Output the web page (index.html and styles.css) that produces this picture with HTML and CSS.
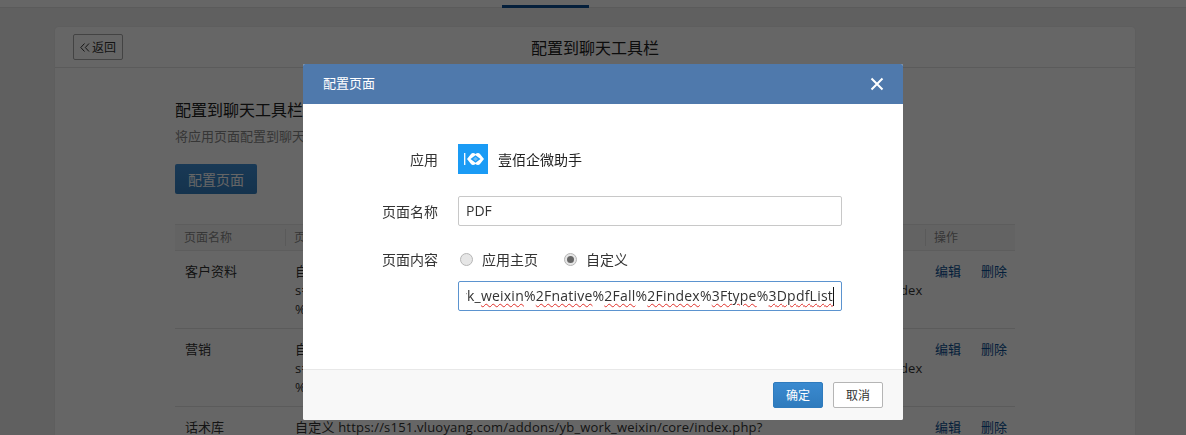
FILE: index.html
```html
<!DOCTYPE html>
<html lang="zh-CN">
<head>
<meta charset="utf-8">
<title>配置到聊天工具栏</title>
<link rel="stylesheet" href="styles.css">
</head>
<body>
<div class="topbar"><span class="topbar-tab"></span></div>
<main class="card">
  <header class="card-head">
    <button class="back"><svg class="back-icon" width="10" height="9" viewBox="0 0 10 9"><path d="M4.500 .5 .8 4.500l3.700 4M9 .5 5.300 4.500 9 8.500" fill="none" stroke="#333" stroke-width="1"/></svg>返回</button>
    <h1 class="card-title">配置到聊天工具栏</h1>
  </header>
  <section class="card-body">
    <h2 class="section-title">配置到聊天工具栏</h2>
    <p class="section-desc">将应用页面配置到聊天工具栏，方便成员在会话中使用</p>
    <button class="primary-btn">配置页面</button>
    <div class="table">
      <div class="row head-row">
        <div class="c1"><span>页面名称</span></div>
        <div class="c2 sep"><span>页面内容</span></div>
        <div class="c3 sep"><span>操作</span></div>
      </div>
      <div class="row">
        <div class="c1">客户资料</div>
        <div class="c2">自定义 https://s151.vluoyang.com/addons/yb_work_weixin/core/index.php?<br>s=/addons/yb_work_weixin/core/index.php%3Fi%3D1%26c%3Dentry%26m%2Fnative%2Fall%2Findex<br>%3Ftype%3Dcustomer</div>
        <div class="c3"><a>编辑</a><a>删除</a></div>
      </div>
      <div class="row">
        <div class="c1">营销</div>
        <div class="c2">自定义 https://s151.vluoyang.com/addons/yb_work_weixin/core/index.php?<br>s=/addons/yb_work_weixin/core/index.php%3Fi%3D1%26c%3Dentry%26m%2Fnative%2Fall%2Findex<br>%3Ftype%3Dmarket</div>
        <div class="c3"><a>编辑</a><a>删除</a></div>
      </div>
      <div class="row">
        <div class="c1">话术库</div>
        <div class="c2">自定义 https://s151.vluoyang.com/addons/yb_work_weixin/core/index.php?</div>
        <div class="c3"><a>编辑</a><a>删除</a></div>
      </div>
    </div>
  </section>
</main>
<div class="overlay"></div>
<div class="modal">
  <div class="modal-head">
    <span class="modal-title">配置页面</span>
    <svg class="close" width="14" height="14" viewBox="0 0 14 14"><path d="M1.500 1.500l11 11M12.500 1.500l-11 11" stroke="#fff" stroke-width="2"/></svg>
  </div>
  <div class="modal-body">
    <div class="form-row app-row">
      <label>应用</label>
      <svg class="app-logo" width="30" height="30" viewBox="0 0 30 30"><rect width="30" height="30" fill="#1a9bf5"/><path d="M6.700 9v12" stroke="#fff" stroke-width="1.300"/><path fill-rule="evenodd" d="M9 15l4-5q.8-1 2-1 1.300 0 2.500 1 1.200-1 2.500-1 1.200 0 2 1l4 5-4 5q-.8 1-2 1-1.300 0-2.500-1-1.200 1-2.500 1-1.200 0-2-1zM17.500 11.200 12.500 15l5 3.800 5-3.800z" fill="#fff"/><path d="M17.500 12.800 15 15l2.500 2.200L20 15z" fill="#fff" opacity=".35"/></svg>
      <span class="app-name">壹佰企微助手</span>
    </div>
    <div class="form-row name-row">
      <label>页面名称</label>
      <div class="input">PDF</div>
    </div>
    <div class="form-row radio-row">
      <label>页面内容</label>
      <span class="radio first"></span><span class="radio-text">应用主页</span>
      <span class="radio checked"></span><span class="radio-text">自定义</span>
    </div>
    <div class="form-row url-row">
      <label></label>
      <div class="input focus"><div class="url-clip"><span class="url">work_<i>weixin</i>%<i>2Fnative</i>%<i>2Fall</i>%<i>2Findex</i>%<i>3Ftype</i>%<i>3DpdfList</i></span></div><b class="caret"></b></div>
    </div>
  </div>
  <div class="modal-foot">
    <button class="ok">确定</button>
    <button class="cancel">取消</button>
  </div>
</div>
</body>
</html>
```
FILE: styles.css
```css
* { box-sizing: border-box; }
html, body { margin: 0; height: 435px; overflow: hidden; }
body {
  background: #f0f0f0;
  font-family: "Open Sans", "Noto Sans CJK SC", sans-serif;
  font-size: 13px;
  color: #333;
}
button { font: inherit; cursor: pointer; }
.topbar {
  height: 8px;
  background: #fff;
  border-bottom: 1px solid #e4e4e4;
  display: flex;
  align-items: flex-end;
  padding-left: 502px;
}
.topbar-tab { width: 87px; height: 3px; background: #0b4f93; margin-bottom: -1px; }
.card {
  width: 1080px;
  margin: 19px 0 0 55px;
  background: #fff;
  border-radius: 4px 4px 0 0;
  box-shadow: 0 0 2px rgba(0,0,0,.08);
}
.card-head {
  height: 41px;
  border-bottom: 1px solid #e4e4e4;
  display: flex;
  align-items: center;
  justify-content: center;
  position: relative;
}
.back {
  position: absolute;
  left: 18px;
  top: 7px;
  width: 50px;
  height: 26px;
  padding: 0;
  background: transparent;
  border: 1px solid #a8a8a8;
  border-radius: 2px;
  color: #333;
  font-size: 12px;
  display: flex;
  align-items: center;
  justify-content: center;
  gap: 2px;
}
.card-title { margin: 0; font-size: 16px; font-weight: 400; color: #222; }
.card-body { padding: 31px 120px 0; height: 367px; overflow: hidden; }
.section-title { margin: 0; font-size: 16px; font-weight: 400; line-height: 22px; color: #222; }
.section-desc { margin: 6px 0 0; font-size: 13px; line-height: 18px; color: #888; }
.primary-btn {
  display: block;
  margin-top: 19px;
  width: 82px;
  height: 30px;
  padding: 0;
  border: 0;
  border-radius: 2px;
  background: linear-gradient(#3f8fd6, #347fc0);
  color: #fff;
  font-size: 14px;
}
.table { margin-top: 30px; width: 840px; }
.row {
  display: grid;
  grid-template-columns: 110px 640px 90px;
  height: 78px;
  border-bottom: 1px solid #e4e4e4;
  line-height: 19px;
}
.row > div { padding: 11px 0 0 10px; }
.head-row {
  height: 27px;
  background: #f8f8f8;
  border-top: 1px solid #e8e8e8;
  border-bottom: 1px solid #e8e8e8;
  color: #888;
  font-size: 12px;
}
.row.head-row > div { padding: 0 0 0 9px; display: flex; align-items: center; }
.head-row .sep { position: relative; }
.head-row .sep::before {
  content: "";
  position: absolute;
  left: 0; top: 4px; bottom: 4px;
  width: 1px;
  background: #e0e0e0;
}
.c3 { white-space: nowrap; }
.c3 a { color: #0b4f93; margin-right: 20px; }
.c2 { white-space: nowrap; overflow: hidden; letter-spacing: .2px; }
.overlay {
  position: fixed;
  inset: 0;
  background: rgba(0,0,0,.6);
}
.modal {
  position: fixed;
  left: 303px;
  top: 64px;
  width: 600px;
  height: 356px;
  background: #fff;
  border-radius: 2px;
  display: flex;
  flex-direction: column;
  overflow: hidden;
}
.modal-head {
  height: 40px;
  flex: none;
  background: #4f79ac;
  color: #fff;
  padding: 0 19px 0 20px;
  display: flex;
  align-items: center;
  justify-content: space-between;
  font-size: 13px;
}
.modal-title { margin-bottom: 3px; }
.close { display: block; }
.modal-body { flex: 1; padding-top: 40px; font-size: 14px; }
.form-row { display: flex; align-items: center; color: #333; }
.form-row label { width: 135px; text-align: right; margin-right: 20px; flex: none; }
.app-logo { display: block; flex: none; }
.app-name { margin-left: 10px; color: #222; }
.name-row { margin-top: 22px; }
.input {
  width: 384px;
  height: 30px;
  border: 1px solid #c8c8c8;
  border-radius: 2px;
  padding: 0 7px;
  line-height: 28px;
  font-size: 14px;
  color: #333;
  background: #fff;
  flex: none;
}
.radio-row { margin-top: 23px; height: 20px; }
.radio {
  width: 13px; height: 13px;
  border-radius: 50%;
  border: 1px solid #b5b5b5;
  background: #e6e6e6;
  flex: none;
  display: flex;
  align-items: center;
  justify-content: center;
}
.radio.first { margin-left: 2px; }
.radio.checked::after { content: ""; width: 7px; height: 7px; border-radius: 50%; background: #666; }
.radio-text { margin: 0 26px 0 9px; }
.url-row { margin-top: 12px; }
.input.focus {
  border-color: #5b93cf;
  display: flex;
  align-items: center;
}
.url-clip {
  flex: 1;
  min-width: 0;
  overflow: hidden;
  display: flex;
  justify-content: flex-end;
  white-space: nowrap;
  letter-spacing: .22px;
}
.url { flex: none; }
.url i { font-style: normal; text-decoration: underline wavy #e0302a 1px; text-underline-offset: 2px; }
.caret { width: 1px; height: 19px; background: #111; flex: none; }
.modal-foot {
  height: 51px;
  flex: none;
  background: #f8f8f8;
  border-top: 1px solid #e8e8e8;
  display: flex;
  align-items: center;
  justify-content: flex-end;
  gap: 10px;
  padding-right: 20px;
}
.ok, .cancel { width: 50px; height: 26px; padding: 0; border-radius: 2px; font-size: 12px; }
.ok { background: linear-gradient(#3a8ad0, #2f7bbd); border: 1px solid #2f7bbd; color: #fff; }
.cancel { background: #fff; border: 1px solid #b5b5b5; color: #333; }
```
